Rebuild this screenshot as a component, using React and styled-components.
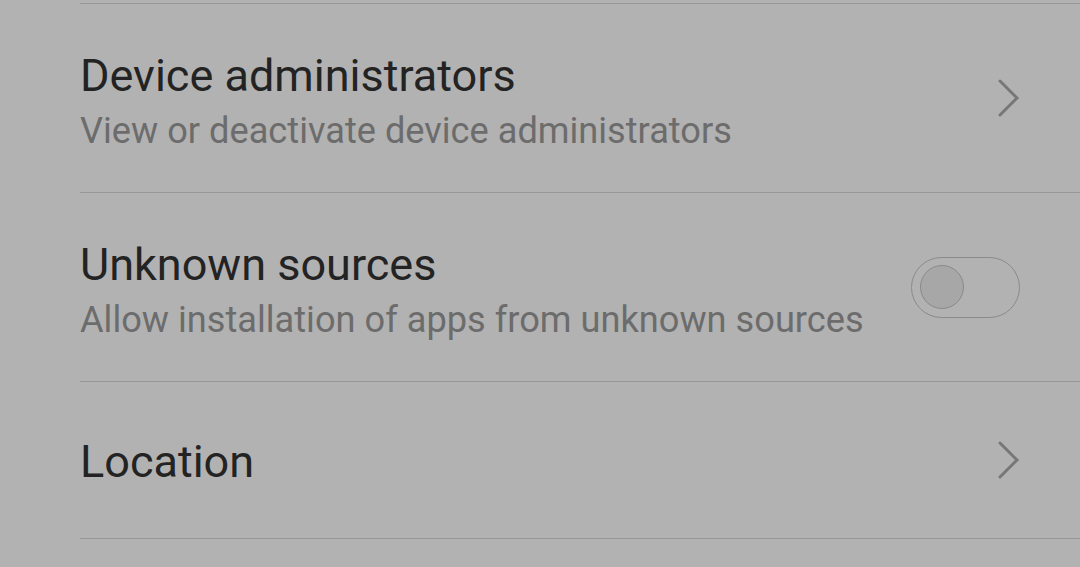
import React from "react";
import styled, { createGlobalStyle } from "styled-components";

const GlobalStyle = createGlobalStyle`
  html, body {
    margin: 0;
    padding: 0;
    background: #b2b2b2;
    font-family: Roboto, "Noto Sans", sans-serif;
  }
`;

const Page = styled.div`
  width: 1080px;
  height: 567px;
  overflow: hidden;
  background: #b2b2b2;
  padding-top: 3px;
  box-sizing: border-box;
`;

const List = styled.div`
  margin-left: 80px;
  display: flex;
  flex-direction: column;
  border-bottom: 1px solid #979797;
`;

const Row = styled.div`
  height: ${(p) => p.$height}px;
  box-sizing: border-box;
  border-top: 1px solid #979797;
  display: flex;
  align-items: center;
  justify-content: space-between;
  padding-right: 60px;
`;

const TextBlock = styled.div`
  display: flex;
  flex-direction: column;
  padding-top: ${(p) => p.$shift}px;
`;

const Title = styled.div`
  font-size: 45px;
  line-height: 56px;
  color: #232323;
`;

const Subtitle = styled.div`
  font-size: 36.2px;
  line-height: 54px;
  color: #6c6c6c;
`;

const Toggle = styled.div`
  width: 109px;
  height: 61px;
  box-sizing: border-box;
  border: 1.3px solid #8a8a8a;
  border-radius: 31px;
  display: flex;
  align-items: center;
  padding-left: 8px;
`;

const Knob = styled.div`
  width: 44px;
  height: 44px;
  box-sizing: border-box;
  border-radius: 50%;
  border: 1.3px solid #8a8a8a;
  background: #a7a7a7;
`;

const Chevron = () => (
  <svg width="22" height="38" viewBox="0 0 22 38">
    <polyline
      points="2,2 19,19 2,36"
      fill="none"
      stroke="#777"
      strokeWidth="3"
      strokeLinecap="round"
      strokeLinejoin="miter"
    />
  </svg>
);

const items = [
  {
    title: "Device administrators",
    subtitle: "View or deactivate device administrators",
    kind: "chevron",
    height: 189,
  },
  {
    title: "Unknown sources",
    subtitle: "Allow installation of apps from unknown sources",
    kind: "toggle",
    height: 189,
  },
  { title: "Location", kind: "chevron", height: 157 },
];

export default function App() {
  return (
    <>
      <GlobalStyle />
      <Page>
        <List>
          {items.map((item) => (
            <Row key={item.title} $height={item.height}>
              <TextBlock $shift={item.subtitle ? 10 : 4}>
                <Title>{item.title}</Title>
                {item.subtitle && <Subtitle>{item.subtitle}</Subtitle>}
              </TextBlock>
              {item.kind === "toggle" ? (
                <Toggle>
                  <Knob />
                </Toggle>
              ) : (
                <Chevron />
              )}
            </Row>
          ))}
        </List>
      </Page>
    </>
  );
}
